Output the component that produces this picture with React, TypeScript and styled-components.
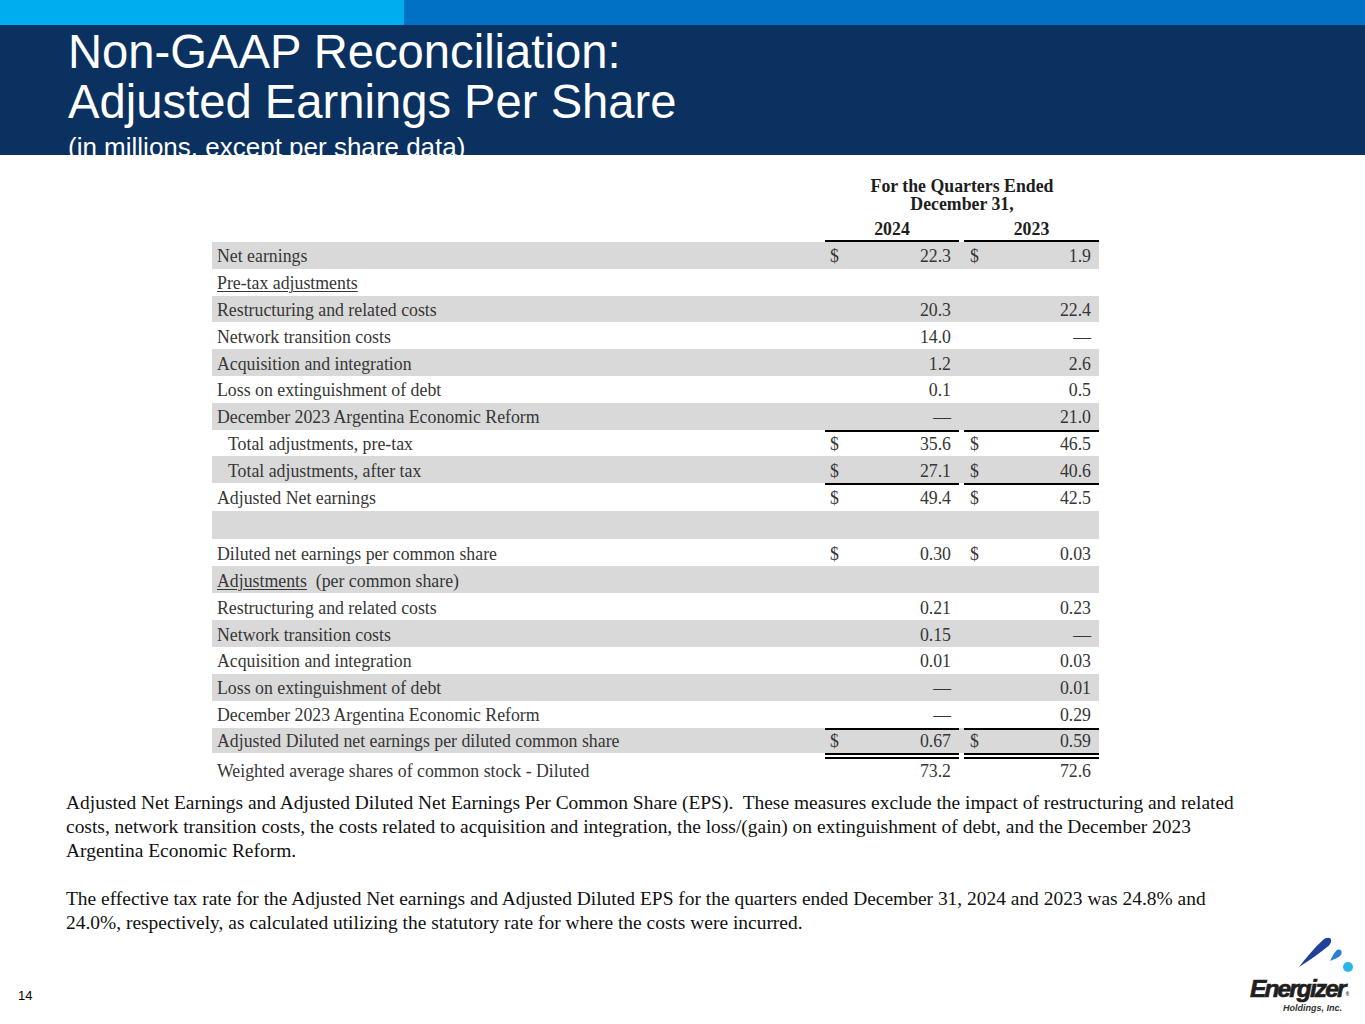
import React from "react";
import styled, { createGlobalStyle } from "styled-components";

const GlobalStyle = createGlobalStyle`
  html, body {
    margin: 0;
    padding: 0;
    background: #fff;
  }
  body {
    width: 1365px;
    height: 1024px;
    overflow: hidden;
  }
`;

const COLS = "613px 134px 5px 135px";

const Slide = styled.div`
  width: 1365px;
  height: 1024px;
  display: flex;
  flex-direction: column;
  background: #fff;
`;

const TopStrip = styled.div`
  display: flex;
  height: 25px;
  flex: none;
`;

const StripSegment = styled.div<{ $color: string; $width?: number }>`
  background: ${(p) => p.$color};
  ${(p) => (p.$width ? `width: ${p.$width}px; flex: none;` : "flex: 1;")}
`;

const Banner = styled.header`
  flex: none;
  height: 130px;
  box-sizing: border-box;
  padding: 2px 0 0 68px;
  overflow: hidden;
  background: #0b3160;
  color: #fff;
  font-family: "Liberation Sans", Arial, sans-serif;
`;

const Title = styled.h1`
  margin: 0;
  font-size: 47.2px;
  line-height: 50px;
  font-weight: normal;
`;

const Subtitle = styled.div`
  margin-top: 5px;
  font-size: 26px;
  line-height: 30px;
`;

const TableWrap = styled.section`
  flex: none;
  width: 887px;
  margin: 22px 0 0 212px;
  font-family: "Liberation Serif", "Times New Roman", serif;
  font-size: 17.8px;
  color: #363636;
`;

const HeadGrid = styled.div`
  display: grid;
  grid-template-columns: ${COLS};
  font-weight: bold;
  line-height: 18px;
  color: #1e1e1e;
`;

const HeadTitle = styled.div`
  grid-column: 2 / 5;
  text-align: center;
`;

const YearCell = styled.div<{ $col: number }>`
  grid-column: ${(p) => p.$col};
  text-align: center;
  margin-top: 7px;
  padding-bottom: 2px;
  border-bottom: 2px solid #000;
`;

const Row = styled.div<{ $shade: boolean; $h: number; $pad: number }>`
  display: grid;
  grid-template-columns: ${COLS};
  height: ${(p) => p.$h}px;
  background: ${(p) => (p.$shade ? "#d9d9d9" : "transparent")};

  & > div {
    padding-top: ${(p) => p.$pad}px;
  }
`;

const Label = styled.div<{ $indent: boolean }>`
  display: flex;
  align-items: center;
  padding-left: ${(p) => (p.$indent ? 16 : 5)}px;
  white-space: pre;
`;

type Rule = "none" | "top" | "double";

const ruleShadow = (r: Rule) =>
  r === "top"
    ? "inset 0 2px 0 #000"
    : r === "double"
    ? "inset 0 2px 0 #000, inset 0 4px 0 #fff, inset 0 6px 0 #000"
    : "none";

const Amount = styled.div<{ $rule: Rule; $lead: number }>`
  display: flex;
  justify-content: space-between;
  align-items: center;
  padding-left: ${(p) => p.$lead}px;
  padding-right: 8px;
  box-shadow: ${(p) => ruleShadow(p.$rule)};
`;

const Under = styled.span`
  text-decoration: underline;
  text-underline-offset: 2px;
  text-decoration-thickness: 1px;
`;

const Notes = styled.div`
  flex: none;
  margin: 8px 0 0 66px;
  font-family: "Liberation Serif", "Times New Roman", serif;
  font-size: 19.45px;
  line-height: 24px;
  color: #111;
`;

const Para = styled.p`
  margin: 0;
  white-space: pre;

  & + & {
    margin-top: 24px;
  }
`;

const Bottom = styled.footer`
  flex: 1;
  display: flex;
  justify-content: space-between;
  align-items: flex-end;
  padding: 0 0 3px 18px;
`;

const PageNum = styled.div`
  margin-bottom: 17px;
  font-family: "Liberation Sans", Arial, sans-serif;
  font-size: 13px;
  line-height: 16px;
  color: #000;
`;

type Cell = [string, string];

interface RowData {
  label: React.ReactNode;
  a?: Cell;
  b?: Cell;
  indent?: boolean;
  rule?: Rule;
  h?: number;
  pad?: number;
}

const rows: RowData[] = [
  { label: "Net earnings", a: ["$", "22.3"], b: ["$", "1.9"] },
  { label: <Under>Pre-tax adjustments</Under> },
  { label: "Restructuring and related costs", a: ["", "20.3"], b: ["", "22.4"] },
  { label: "Network transition costs", a: ["", "14.0"], b: ["", "—"] },
  { label: "Acquisition and integration", a: ["", "1.2"], b: ["", "2.6"] },
  { label: "Loss on extinguishment of debt", a: ["", "0.1"], b: ["", "0.5"] },
  { label: "December 2023 Argentina Economic Reform", a: ["", "—"], b: ["", "21.0"] },
  { label: "Total adjustments, pre-tax", indent: true, a: ["$", "35.6"], b: ["$", "46.5"], rule: "top" },
  { label: "Total adjustments, after tax", indent: true, a: ["$", "27.1"], b: ["$", "40.6"] },
  { label: "Adjusted Net earnings", a: ["$", "49.4"], b: ["$", "42.5"], rule: "top", h: 27.8 },
  { label: "", h: 28.5 },
  { label: "Diluted net earnings per common share", a: ["$", "0.30"], b: ["$", "0.03"], h: 26.9 },
  {
    label: (
      <>
        <Under>Adjustments</Under>
        {"  (per common share)"}
      </>
    ),
    h: 26.9,
  },
  { label: "Restructuring and related costs", a: ["", "0.21"], b: ["", "0.23"], h: 26.9 },
  { label: "Network transition costs", a: ["", "0.15"], b: ["", "—"], h: 26.9 },
  { label: "Acquisition and integration", a: ["", "0.01"], b: ["", "0.03"], h: 26.9 },
  { label: "Loss on extinguishment of debt", a: ["", "—"], b: ["", "0.01"], h: 26.9 },
  { label: "December 2023 Argentina Economic Reform", a: ["", "—"], b: ["", "0.29"], h: 26.9 },
  {
    label: "Adjusted Diluted net earnings per diluted common share",
    a: ["$", "0.67"],
    b: ["$", "0.59"],
    rule: "top",
    h: 25.3,
  },
  {
    label: "Weighted average shares of common stock - Diluted",
    a: ["", "73.2"],
    b: ["", "72.6"],
    rule: "double",
    h: 30,
    pad: 6,
  },
];

const notes = [
  [
    "Adjusted Net Earnings and Adjusted Diluted Net Earnings Per Common Share (EPS).  These measures exclude the impact of restructuring and related",
    "costs, network transition costs, the costs related to acquisition and integration, the loss/(gain) on extinguishment of debt, and the December 2023",
    "Argentina Economic Reform.",
  ],
  [
    "The effective tax rate for the Adjusted Net earnings and Adjusted Diluted EPS for the quarters ended December 31, 2024 and 2023 was 24.8% and",
    "24.0%, respectively, as calculated utilizing the statutory rate for where the costs were incurred.",
  ],
];

const EnergizerLogo = () => (
  <svg width="125" height="85" viewBox="0 0 125 85">
    <path
      d="M59,31 C66,22 74,12 83,4 C85,2 89,1 90.5,2.5 C92,4.5 91,7.5 89,9.5 C80,17 70,24 59,31 Z"
      fill="#21409a"
    />
    <path
      d="M90,25 C92,21 94,17 96,15 C98,13 101,13 101.5,16 C102,19 99,21 97,22 C95,23 92,24 90,25 Z"
      fill="#2b7fd0"
    />
    <circle cx="108" cy="31" r="5" fill="#2ab5e8" />
    <text
      x="10"
      y="61"
      fontFamily="'Liberation Sans', Arial, sans-serif"
      fontWeight="bold"
      fontStyle="italic"
      fontSize="24.5"
      letterSpacing="-1.9"
      fill="#1f1f1f"
      stroke="#1f1f1f"
      strokeWidth="0.7"
    >
      Energizer
      <tspan fontSize="5" dx="1" dy="-1" strokeWidth="0">
        ®
      </tspan>
    </text>
    <text
      x="43"
      y="75"
      fontFamily="'Liberation Sans', Arial, sans-serif"
      fontWeight="bold"
      fontStyle="italic"
      fontSize="9"
      fill="#333"
    >
      Holdings, Inc.
    </text>
  </svg>
);

const AmountCell = ({ cell, rule, lead }: { cell?: Cell; rule: Rule; lead: number }) => (
  <Amount $rule={rule} $lead={lead}>
    <span>{cell ? cell[0] : ""}</span>
    <span>{cell ? cell[1] : ""}</span>
  </Amount>
);

export default function App() {
  return (
    <>
      <GlobalStyle />
      <Slide>
        <TopStrip>
          <StripSegment $color="#00aeef" $width={404} />
          <StripSegment $color="#0071c5" />
        </TopStrip>
        <Banner>
          <Title>
            Non-GAAP Reconciliation:
            <br />
            Adjusted Earnings Per Share
          </Title>
          <Subtitle>(in millions, except per share data)</Subtitle>
        </Banner>

        <TableWrap>
          <HeadGrid>
            <HeadTitle>
              For the Quarters Ended
              <br />
              December 31,
            </HeadTitle>
            <YearCell $col={2}>2024</YearCell>
            <YearCell $col={4}>2023</YearCell>
          </HeadGrid>
          {rows.map((r, i) => {
            const rule = r.rule ?? "none";
            return (
              <Row key={i} $shade={i % 2 === 0} $h={r.h ?? 26.8} $pad={r.pad ?? 3}>
                <Label $indent={!!r.indent}>{r.label}</Label>
                <AmountCell cell={r.a} rule={rule} lead={5} />
                <div />
                <AmountCell cell={r.b} rule={rule} lead={6} />
              </Row>
            );
          })}
        </TableWrap>

        <Notes>
          {notes.map((lines, i) => (
            <Para key={i}>{lines.join("\n")}</Para>
          ))}
        </Notes>

        <Bottom>
          <PageNum>14</PageNum>
          <EnergizerLogo />
        </Bottom>
      </Slide>
    </>
  );
}
